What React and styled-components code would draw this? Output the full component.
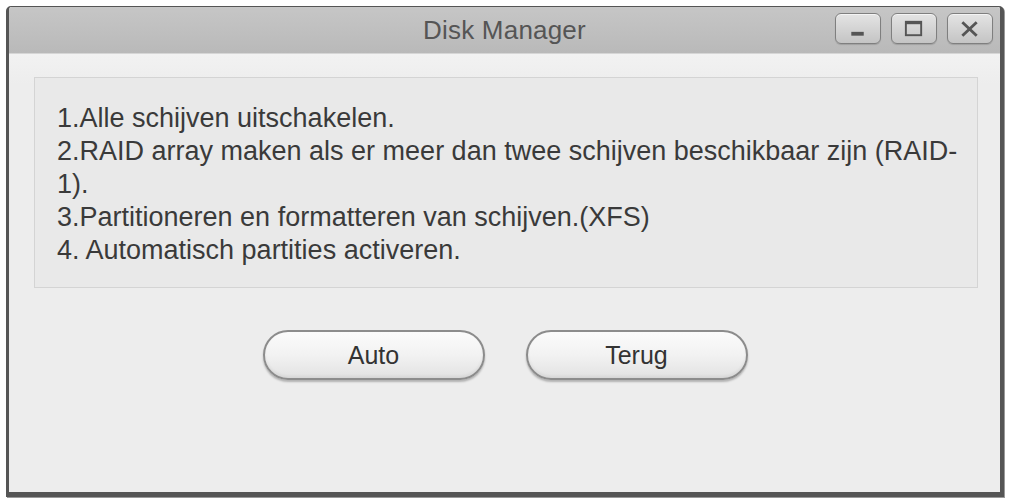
import React from "react";
import styled, { createGlobalStyle } from "styled-components";

const Global = createGlobalStyle`
  html, body { margin: 0; padding: 0; background: #ffffff; }
  body { font-family: "Liberation Sans", Arial, sans-serif; }
`;

const Page = styled.div`
  padding: 6px 0 0 6px;
  width: 1009px;
  height: 501px;
  box-sizing: border-box;
`;

const Window = styled.div`
  width: 998px;
  height: 491px;
  box-sizing: border-box;
  border-style: solid;
  border-color: #555;
  border-width: 1px 4px 5px 3px;
  border-radius: 5px 5px 0 0;
  background: #ededed;
  display: flex;
  flex-direction: column;
  box-shadow: 1px 1px 0 #9a9a9a;
`;

const TitleBar = styled.div`
  position: relative;
  height: 46px;
  flex: none;
  display: flex;
  align-items: center;
  justify-content: center;
  background: linear-gradient(#c6c6c6, #b9b9b9);
  border-bottom: 1px solid #d6d6d6;
  border-radius: 3px 3px 0 0;
`;

const Title = styled.div`
  font-size: 26px;
  color: #555;
  letter-spacing: 0.2px;
`;

const Controls = styled.div`
  position: absolute;
  right: 7px;
  top: 6px;
  display: flex;
  gap: 10px;
`;

const CtrlButton = styled.div`
  width: 46px;
  height: 31px;
  box-sizing: border-box;
  border: 1px solid #7f7f7f;
  border-radius: 6px;
  background: linear-gradient(#e4e4e4, #c4c4c4);
  box-shadow: inset 0 1px 0 #f4f4f4, 0 1px 1px rgba(0,0,0,0.15);
  display: flex;
  align-items: center;
  justify-content: center;
`;

const Body = styled.div`
  flex: 1;
  display: flex;
  flex-direction: column;
  padding: 23px 22px 0 25px;
  background: linear-gradient(#f2f2f2, #ededed 30px);
`;

const Panel = styled.div`
  border: 1px solid #d4d4d4;
  background: #e9e9e9;
  padding: 24px 22px 20px 22px;
  font-size: 27px;
  line-height: 33px;
  color: #3a3a3a;
`;

const Line = styled.div`
  white-space: nowrap;
`;

const ButtonRow = styled.div`
  display: flex;
  justify-content: center;
  gap: 41px;
  margin-top: 42px;
  padding-right: 2px;
`;

const PillButton = styled.div`
  width: 222px;
  height: 50px;
  box-sizing: border-box;
  border: 2px solid #8c8c8c;
  border-radius: 25px;
  background: linear-gradient(#fbfbfb, #f2f2f2 50%, #e2e2e2);
  box-shadow: 0 2px 2px rgba(0, 0, 0, 0.25), inset 0 -2px 3px rgba(0,0,0,0.06);
  display: flex;
  align-items: center;
  justify-content: center;
  font-size: 25px;
  color: #333;
`;

const lines = [
  "1.Alle schijven uitschakelen.",
  "2.RAID array maken als er meer dan twee schijven beschikbaar zijn (RAID-",
  "1).",
  "3.Partitioneren en formatteren van schijven.(XFS)",
  "4. Automatisch partities activeren.",
];

export default function App() {
  return (
    <Page>
      <Global />
      <Window>
        <TitleBar>
          <Title>Disk Manager</Title>
          <Controls>
            <CtrlButton>
              <svg width="46" height="31" viewBox="0 0 46 31">
                <rect x="16" y="19" width="13" height="4" fill="#555" />
              </svg>
            </CtrlButton>
            <CtrlButton>
              <svg width="46" height="31" viewBox="0 0 46 31">
                <rect x="14.5" y="8.5" width="16" height="14" fill="none" stroke="#555" strokeWidth="2" />
                <rect x="14" y="8" width="17" height="3" fill="#555" />
              </svg>
            </CtrlButton>
            <CtrlButton>
              <svg width="46" height="31" viewBox="0 0 46 31">
                <path d="M15 9 L30 23 M30 9 L15 23" stroke="#555" strokeWidth="3" />
              </svg>
            </CtrlButton>
          </Controls>
        </TitleBar>
        <Body>
          <Panel>
            {lines.map((l, i) => (
              <Line key={i}>{l}</Line>
            ))}
          </Panel>
          <ButtonRow>
            <PillButton>Auto</PillButton>
            <PillButton>Terug</PillButton>
          </ButtonRow>
        </Body>
      </Window>
    </Page>
  );
}
